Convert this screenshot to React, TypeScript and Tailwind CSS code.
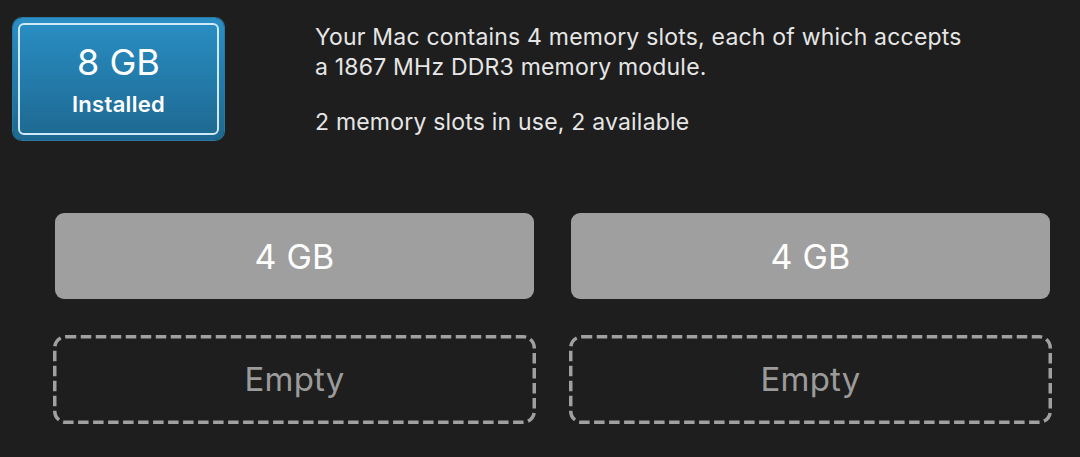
import React from "react";

function EmptySlot() {
  return (
    <div className="relative -mx-[2px] h-[89px] flex items-center justify-center text-[#9b9b9b] text-[33px] tracking-[0.2px]">
      <svg className="absolute inset-0" width="483" height="89" viewBox="0 0 483 89" fill="none">
        <rect x="1.75" y="1.75" width="479.5" height="85.5" rx="11" stroke="#a0a0a0" strokeWidth="3.5" strokeDasharray="10.5 4.5" />
      </svg>
      <span className="relative">Empty</span>
    </div>
  );
}

function FilledSlot() {
  return (
    <div className="h-[86px] rounded-[9px] bg-[#9f9f9f] flex items-center justify-center text-white text-[34px] tracking-[0.2px]">4 GB</div>
  );
}

export default function App() {
  const font = { fontFamily: "Inter, 'Noto Sans', sans-serif" };
  return (
    <div className="w-[1080px] h-[457px] bg-[#1e1e1e] overflow-hidden" style={font}>
      <div className="flex pt-[18px] pl-[13px]">
        <div className="w-[211px] h-[122px] rounded-[9px] p-[5px] bg-gradient-to-b from-[#2a8fc5] to-[#1d6890] shadow-[0_0_0_1px_#2a78a3]">
          <div className="w-full h-full rounded-[6px] border-2 border-[#cfe9f6] flex flex-col items-center pt-[17px]">
            <div className="text-[36px] leading-[40px] text-white">8 GB</div>
            <div className="text-[22px] leading-[26px] font-semibold text-white mt-[9px] tracking-[0.3px]">Installed</div>
          </div>
        </div>
        <div className="ml-[91px] pt-[4px] text-[23px] leading-[30px] text-[#e6e6e6] tracking-[0.2px]">
          <div>Your Mac contains 4 memory slots, each of which accepts</div>
          <div>a 1867 MHz DDR3 memory module.</div>
          <div className="mt-[25px]">2 memory slots in use, 2 available</div>
        </div>
      </div>
      <div className="grid grid-cols-2 gap-x-[37px] gap-y-[36px] mt-[73px] ml-[55px] w-[995px]">
        <FilledSlot />
        <FilledSlot />
        <EmptySlot />
        <EmptySlot />
      </div>
    </div>
  );
}
